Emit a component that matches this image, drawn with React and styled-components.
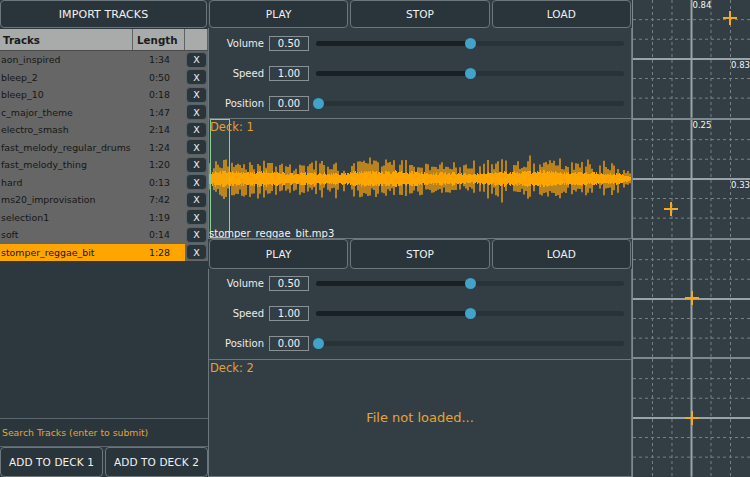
import { useMemo } from "react";
import styled, { createGlobalStyle } from "styled-components";

const GlobalStyle = createGlobalStyle`
    html, body {
        margin: 0;
        padding: 0;
        background: #323e44;
    }
    body {
        font-family: "DejaVu Sans", Verdana, sans-serif;
    }
    * {
        box-sizing: border-box;
    }
`;

const Screen = styled.div`
    width: 750px;
    height: 477px;
    display: grid;
    grid-template-columns: 208px 424px 118px;
    background: #323e44;
    overflow: hidden;
`;

/* ---------- shared ---------- */

const PanelButton = styled.button`
    flex: 1;
    height: ${(p) => p.$h || 28}px;
    margin: 0;
    padding: 0;
    background: #2a353b;
    border: 1px solid #6c777c;
    border-radius: 4px;
    color: #f2f2f2;
    font-family: "DejaVu Sans", Verdana, sans-serif;
    font-size: ${(p) => p.$size || 10.5}px;
    letter-spacing: 0.1px;
    cursor: pointer;
`;

/* ---------- library ---------- */

const Library = styled.div`
    display: flex;
    flex-direction: column;
    background: #2d383e;
`;

const ImportRow = styled.div`
    display: flex;
    height: 29px;
    padding: 0 1px 1px 0;
`;

const TableHeader = styled.div`
    display: grid;
    grid-template-columns: 133px 52px 1fr;
    height: 22px;
    background: #a9abab;
    border-bottom: 1px solid #4b4b4b;
`;

const HeaderCell = styled.div`
    display: flex;
    align-items: center;
    padding-left: ${(p) => p.$pad || 3}px;
    font-size: 10.3px;
    font-weight: bold;
    color: #1b1b1b;
    border-right: 1px solid #5f6262;
`;

const TrackRow = styled.div`
    display: grid;
    grid-template-columns: 133px 52px 1fr;
    height: 17.5px;
`;

const NameCell = styled.div`
    display: flex;
    align-items: center;
    padding-left: 1px;
    font-size: 9.4px;
    color: #161616;
    white-space: nowrap;
    overflow: hidden;
    background: ${(p) => (p.$selected ? "#ffa500" : "#666666")};
`;

const LengthCell = styled(NameCell)`
    justify-content: flex-end;
    padding: 0 15px 0 0;
`;

const RemoveCell = styled.div`
    display: flex;
    align-items: center;
    justify-content: center;
    background: #666666;
`;

const RemoveButton = styled.button`
    width: 21px;
    height: 16px;
    padding: 0;
    background: #2a353b;
    border: 1px solid #56636a;
    border-radius: 4px;
    color: #f2f2f2;
    font-family: "DejaVu Sans", Verdana, sans-serif;
    font-size: 9.5px;
`;

const LibraryFill = styled.div`
    flex: 1;
`;

const SearchBox = styled.div`
    height: 29px;
    display: flex;
    align-items: center;
    padding-left: 2px;
    border-top: 1px solid #59656b;
    border-bottom: 1px solid #59656b;
    background: #2b363c;
    color: #e6a334;
    font-size: 9.3px;
`;

const AddRow = styled.div`
    display: flex;
    gap: 2px;
    height: 30px;
`;

/* ---------- decks ---------- */

const DeckColumn = styled.div`
    display: flex;
    flex-direction: column;
`;

const Deck = styled.section`
    flex: 1;
    display: flex;
    flex-direction: column;
`;

const TransportRow = styled.div`
    display: flex;
    gap: 2px;
    padding: 0 1px;
`;

const Controls = styled.div`
    display: flex;
    flex-direction: column;
    height: 90px;
    border-left: 1px solid #6c777c;
    border-right: 1px solid #6c777c;
`;

const SliderRow = styled.div`
    flex: 1;
    display: flex;
    align-items: center;
`;

const SliderLabel = styled.div`
    width: 55px;
    text-align: right;
    font-size: 10px;
    color: #ececec;
`;

const ValueBox = styled.div`
    width: 40px;
    height: 15px;
    margin-left: 5px;
    display: flex;
    align-items: center;
    justify-content: center;
    border: 1px solid #879196;
    font-size: 10px;
    color: #f4f4f4;
`;

const Track = styled.div`
    position: relative;
    flex: 1;
    height: 5px;
    margin: 0 7px 0 7px;
    border-radius: 3px;
    background: #283338;
`;

const TrackFill = styled.div`
    height: 100%;
    border-radius: 3px;
    background: #182024;
`;

const Thumb = styled.div`
    position: absolute;
    top: 50%;
    width: 11px;
    height: 11px;
    margin: -5.5px 0 0 -5.5px;
    border-radius: 50%;
    background: #42a2c8;
`;

const WavePanel = styled.div`
    position: relative;
    flex: 1;
    display: flex;
    align-items: center;
    justify-content: center;
    border: 1px solid #6c777c;
    overflow: hidden;
`;

const DeckTitle = styled.div`
    position: absolute;
    top: 1px;
    left: 1px;
    font-size: 11.5px;
    color: #e0a23a;
    z-index: 2;
`;

const FileName = styled.div`
    position: absolute;
    left: 0;
    bottom: -1px;
    font-size: 10px;
    color: #f4f4f4;
    z-index: 2;
`;

const WaveSvg = styled.svg`
    position: absolute;
    inset: 0;
    width: 100%;
    height: 100%;
`;

const Playhead = styled.div`
    position: absolute;
    top: 0;
    bottom: 0;
    left: 1px;
    width: 20px;
    border: 1px solid #8fcf95;
    background: rgba(143, 207, 149, 0.05);
    z-index: 1;
`;

const EmptyMessage = styled.div`
    font-size: 13px;
    color: #e6a434;
`;

/* ---------- pads ---------- */

const PadColumn = styled.div`
    display: flex;
    flex-direction: column;
    gap: 2px;
    padding-left: 1px;
    background: #7f898d;
`;

const Pad = styled.div`
    position: relative;
    flex: 1;
    background: #323e44;
    overflow: hidden;
`;

const PadGrid = styled.svg`
    position: absolute;
    inset: 0;
    width: 100%;
    height: 100%;
`;

const PadValue = styled.div`
    position: absolute;
    font-size: 8.5px;
    color: #f4f4f4;
    white-space: nowrap;
    ${(p) => (p.$side === "top" ? "top: 0; left: calc(50% + 1px);" : "top: calc(50% + 1px); right: 0;")}
`;

const Marker = styled.svg`
    position: absolute;
    width: 16px;
    height: 16px;
    margin: -8px 0 0 -8px;
`;

/* ---------- data ---------- */

const tracks = [
    ["aon_inspired", "1:34"],
    ["bleep_2", "0:50"],
    ["bleep_10", "0:18"],
    ["c_major_theme", "1:47"],
    ["electro_smash", "2:14"],
    ["fast_melody_regular_drums", "1:24"],
    ["fast_melody_thing", "1:20"],
    ["hard", "0:13"],
    ["ms20_improvisation", "7:42"],
    ["selection1", "1:19"],
    ["soft", "0:14"],
    ["stomper_reggae_bit", "1:28"],
];

const sliders = [
    ["Volume", "0.50", 0.5],
    ["Speed", "1.00", 0.5],
    ["Position", "0.00", 0],
];

const pads = [
    { x: 0.83, y: 0.846, labels: ["0.84", "0.83"] },
    { x: 0.325, y: 0.246, labels: ["0.25", "0.33"] },
    { x: 0.5, y: 0.5 },
    { x: 0.5, y: 0.5 },
];

function buildWave(width, mid) {
    let s = 90210;
    const rnd = () => {
        s = (s * 1664525 + 1013904223) % 4294967296;
        return s / 4294967296;
    };
    let spikes = "";
    let core = "";
    for (let x = 0; x < width; x++) {
        let env = 1;
        if (x > 408) env = Math.max(0.25, 1 - (x - 408) / 18);
        const swell = 0.85 + 0.12 * Math.sin(x / 23) + 0.08 * Math.sin(x / 7.3);
        const c = (5 + rnd() * 3.5) * env * swell;
        core += `M${x + 0.5} ${(mid - c).toFixed(1)}V${(mid + c).toFixed(1)}`;
        if (x % 2 === 0 && rnd() < 0.75) {
            const big = rnd() < 0.1 ? 5 : 0;
            const up = c + (4 + rnd() * 9) * env * swell + big;
            const down = c + (4 + rnd() * 9) * env * swell + big;
            spikes += `M${x + 1} ${(mid - up).toFixed(1)}V${(mid + down).toFixed(1)}`;
        }
    }
    return { spikes, core };
}

/* ---------- components ---------- */

function Waveform() {
    const wave = useMemo(() => buildWave(422, 59), []);
    return (
        <WaveSvg viewBox="0 0 422 117" preserveAspectRatio="none">
            <path d={wave.spikes} stroke="#f5a10e" strokeWidth="1.4" fill="none" />
            <path d={wave.core} stroke="#ffa500" strokeWidth="1" fill="none" shapeRendering="crispEdges" />
        </WaveSvg>
    );
}

function Slider({ label, value, fraction }) {
    const pos = `calc(2px + ${fraction} * (100% - 4px))`;
    return (
        <SliderRow>
            <SliderLabel>{label}</SliderLabel>
            <ValueBox>{value}</ValueBox>
            <Track>
                <TrackFill style={{ width: pos }} />
                <Thumb style={{ left: pos }} />
            </Track>
        </SliderRow>
    );
}

function DeckPanel({ number, fileName, buttonHeight }) {
    return (
        <Deck>
            <TransportRow>
                <PanelButton $h={buttonHeight}>PLAY</PanelButton>
                <PanelButton $h={buttonHeight}>STOP</PanelButton>
                <PanelButton $h={buttonHeight}>LOAD</PanelButton>
            </TransportRow>
            <Controls>
                {sliders.map(([label, value, fraction]) => (
                    <Slider key={label} label={label} value={value} fraction={fraction} />
                ))}
            </Controls>
            <WavePanel>
                <DeckTitle>Deck: {number}</DeckTitle>
                {fileName ? (
                    <>
                        <Waveform />
                        <Playhead />
                        <FileName>{fileName}</FileName>
                    </>
                ) : (
                    <EmptyMessage>File not loaded...</EmptyMessage>
                )}
            </WavePanel>
        </Deck>
    );
}

function XYPad({ x, y, labels }) {
    const cols = [1, 2, 4, 5].map((i) => (i * 100) / 6);
    return (
        <Pad>
            <PadGrid viewBox="0 0 100 100" preserveAspectRatio="none">
                <g stroke="#a4adb1" strokeWidth="1" strokeDasharray="3 3" opacity="0.6">
                    {cols.map((c) => (
                        <g key={c}>
                            <line x1={c} y1="0" x2={c} y2="100" vectorEffect="non-scaling-stroke" />
                            <line x1="0" y1={c} x2="100" y2={c} vectorEffect="non-scaling-stroke" />
                        </g>
                    ))}
                </g>
                <line x1="50" y1="0" x2="50" y2="100" stroke="#9aa4a8" strokeWidth="2" vectorEffect="non-scaling-stroke" />
                <line x1="0" y1="50" x2="100" y2="50" stroke="#9aa4a8" strokeWidth="2" vectorEffect="non-scaling-stroke" />
            </PadGrid>
            {labels && (
                <>
                    <PadValue $side="top">{labels[0]}</PadValue>
                    <PadValue $side="right">{labels[1]}</PadValue>
                </>
            )}
            <Marker viewBox="0 0 16 16" style={{ left: `${x * 100}%`, top: `${(1 - y) * 100}%` }}>
                <path d="M8 1V15M1 8H15" stroke="#f2aa22" strokeWidth="2" />
            </Marker>
        </Pad>
    );
}

export default function App() {
    return (
        <>
            <GlobalStyle />
            <Screen>
                <Library>
                    <ImportRow>
                        <PanelButton $size={11}>IMPORT TRACKS</PanelButton>
                    </ImportRow>
                    <TableHeader>
                        <HeaderCell>Tracks</HeaderCell>
                        <HeaderCell $pad={4}>Length</HeaderCell>
                        <HeaderCell />
                    </TableHeader>
                    {tracks.map(([name, length]) => {
                        const selected = name === "stomper_reggae_bit";
                        return (
                            <TrackRow key={name}>
                                <NameCell $selected={selected}>{name}</NameCell>
                                <LengthCell $selected={selected}>{length}</LengthCell>
                                <RemoveCell>
                                    <RemoveButton>X</RemoveButton>
                                </RemoveCell>
                            </TrackRow>
                        );
                    })}
                    <LibraryFill />
                    <SearchBox>Search Tracks (enter to submit)</SearchBox>
                    <AddRow>
                        <PanelButton $h={30}>ADD TO DECK 1</PanelButton>
                        <PanelButton $h={30}>ADD TO DECK 2</PanelButton>
                    </AddRow>
                </Library>
                <DeckColumn>
                    <DeckPanel number={1} fileName="stomper_reggae_bit.mp3" buttonHeight={28} />
                    <DeckPanel number={2} buttonHeight={30} />
                </DeckColumn>
                <PadColumn>
                    {pads.map((pad, i) => (
                        <XYPad key={i} {...pad} />
                    ))}
                </PadColumn>
            </Screen>
        </>
    );
}
